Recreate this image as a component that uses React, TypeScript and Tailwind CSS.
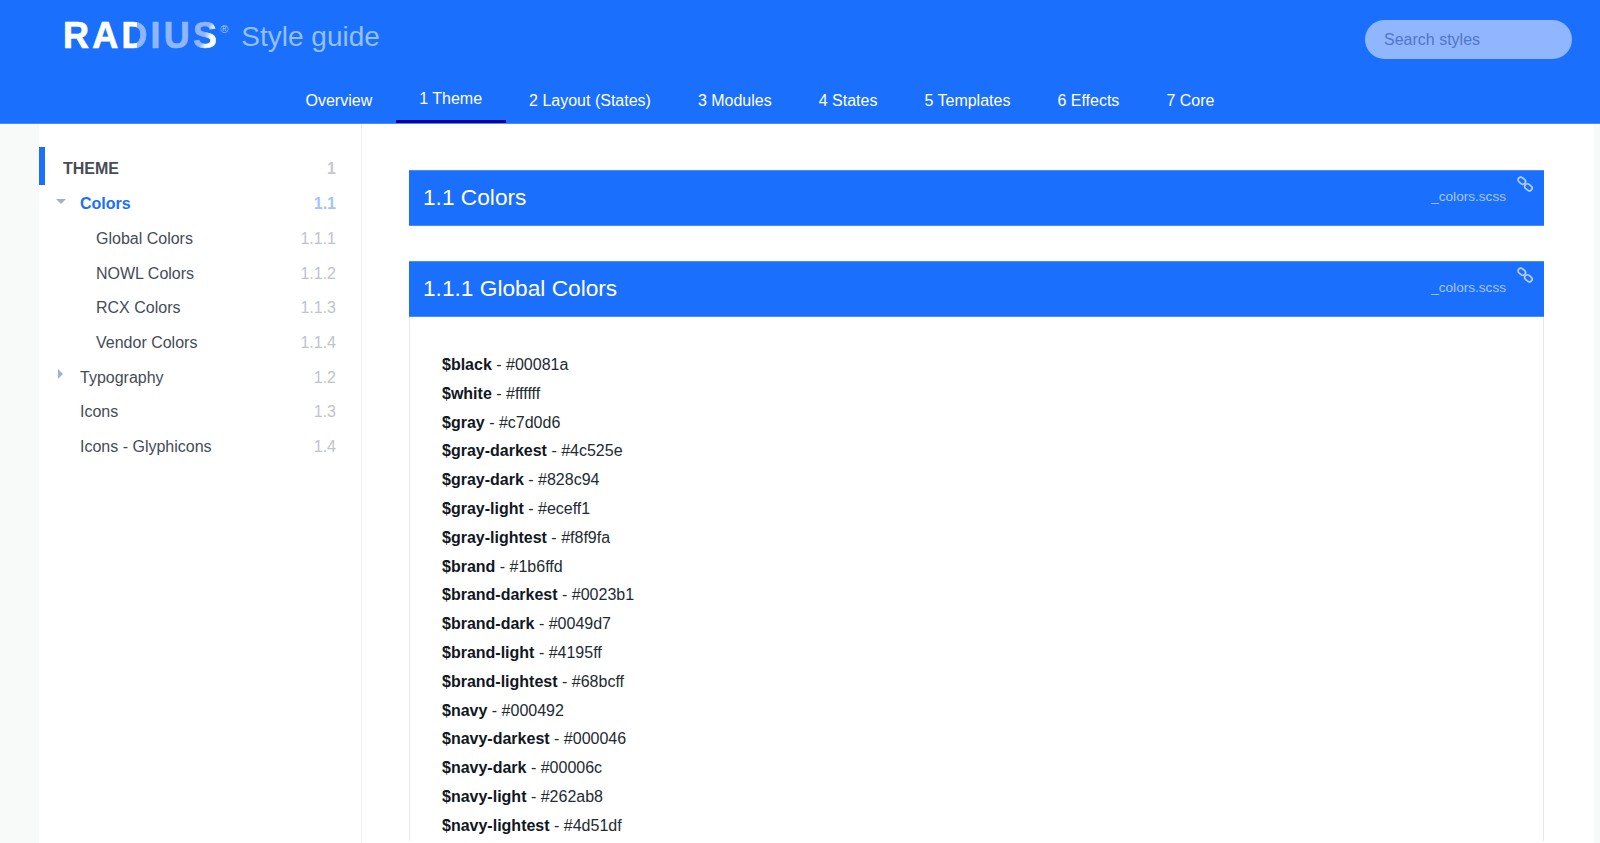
import React from "react";

const tabs = ["Overview", "1 Theme", "2 Layout (States)", "3 Modules", "4 States", "5 Templates", "6 Effects", "7 Core"];

const colors: [string, string][] = [
  ["$black", "#00081a"],
  ["$white", "#ffffff"],
  ["$gray", "#c7d0d6"],
  ["$gray-darkest", "#4c525e"],
  ["$gray-dark", "#828c94"],
  ["$gray-light", "#eceff1"],
  ["$gray-lightest", "#f8f9fa"],
  ["$brand", "#1b6ffd"],
  ["$brand-darkest", "#0023b1"],
  ["$brand-dark", "#0049d7"],
  ["$brand-light", "#4195ff"],
  ["$brand-lightest", "#68bcff"],
  ["$navy", "#000492"],
  ["$navy-darkest", "#000046"],
  ["$navy-dark", "#00006c"],
  ["$navy-light", "#262ab8"],
  ["$navy-lightest", "#4d51df"],
];

const ChainIcon = () => (
  <svg width="16" height="16" viewBox="0 0 16 16" fill="none" stroke="#b4ceff" strokeWidth="1.7" className="absolute right-[11px] top-[5px]">
    <rect x="0.8" y="2" width="8" height="5.4" rx="2.7" transform="rotate(40 4.8 4.7)" />
    <rect x="7.4" y="8.6" width="8" height="5.4" rx="2.7" transform="rotate(40 11.4 11.3)" />
  </svg>
);

const PanelHeader = ({ title }: { title: string }) => (
  <div className="relative flex h-[56px] items-center justify-between border-y border-[#4a8bff] bg-[#1b6ffd] pl-[14px] pr-[38px]">
    <h2 className="-mt-[1px] text-[22.7px] text-white">{title}</h2>
    <span className="-mt-[2px] text-[13.6px] text-[#a9c7ff]">_colors.scss</span>
    <ChainIcon />
  </div>
);

const NavRow = ({ label, num, className, numClass }: { label: string; num: string; className: string; numClass?: string }) => (
  <div className="flex h-[34.7px] items-center justify-between pr-[25px]">
    <span className={className}>{label}</span>
    <span className={numClass ?? "text-[#bfc4c9]"}>{num}</span>
  </div>
);

export default function App() {
  return (
    <div className="flex h-[843px] flex-col overflow-hidden bg-white font-['Liberation_Sans',Arial,sans-serif] text-[16px]">
      <header className="h-[124px] shrink-0 border-b border-[#4a8bff] bg-[#1b6ffd]">
        <div className="flex h-[79px] items-start justify-between pl-[63px] pr-[28px]">
          <div className="flex items-center pt-[15px]">
            <span className="text-[36px] leading-[40px] font-bold tracking-[3.2px] text-white [-webkit-text-stroke:0.7px]">
              RA
              <span className="bg-[linear-gradient(90deg,#ffffff_52%,#8fb6ff_52%)] bg-clip-text text-transparent">D</span>
              <span className="text-[#8fb6ff]">IU</span>
              <span className="bg-[linear-gradient(115deg,#8fb6ff_45%,#ffffff_60%)] bg-clip-text text-transparent">S</span>
            </span>
            <span className="mb-[14px] text-[11px] text-[#a9c7ff]">®</span>
            <span className="mt-[2px] ml-[13px] text-[28px] leading-[40px] text-[#93c0f5]">Style guide</span>
          </div>
          <div className="mt-[20px] flex h-[39px] w-[207px] items-center rounded-full bg-[#8fb6ff] pl-[19px] text-[#4f78c4]">Search styles</div>
        </div>
        <nav className="flex h-[44px] pl-[282px]">
          {tabs.map((t) => (
            <a
              key={t}
              className={
                t === "1 Theme"
                  ? "flex h-[44px] items-center border-b-[3px] border-[#000492] px-[23.5px] pb-[2px] text-white"
                  : "flex h-[44px] items-center px-[23.5px] text-white"
              }
            >
              {t}
            </a>
          ))}
        </nav>
      </header>

      <div className="flex min-h-0 flex-1">
        <div className="w-[39px] shrink-0 bg-[#f8f9f9]" />
        <aside className="w-[323px] shrink-0 border-r border-[#eceff1] pt-[23px]">
          <div className="mb-[2px] flex h-[38px] items-center justify-between border-l-[6px] border-[#1b6ffd] pt-[6px] pr-[25px] pl-[18px]">
            <span className="font-bold text-[#454b57]">THEME</span>
            <span className="font-bold text-[#c7c9cc]">1</span>
          </div>
          <div className="relative pl-[41px]">
            <NavRow label="Colors" num="1.1" className="font-bold text-[#1b6ffd]" numClass="font-bold text-[#a3c3ff]" />
            <span className="absolute top-[12px] left-[17px] h-0 w-0 border-x-[5px] border-t-[5px] border-x-transparent border-t-[#a3b0d4]" />
          </div>
          <div className="pl-[57px]">
            <NavRow label="Global Colors" num="1.1.1" className="text-[#454b57]" />
            <NavRow label="NOWL Colors" num="1.1.2" className="text-[#454b57]" />
            <NavRow label="RCX Colors" num="1.1.3" className="text-[#454b57]" />
            <NavRow label="Vendor Colors" num="1.1.4" className="text-[#454b57]" />
          </div>
          <div className="relative pl-[41px]">
            <NavRow label="Typography" num="1.2" className="text-[#454b57]" />
            <span className="absolute top-[9px] left-[19px] h-0 w-0 border-y-[5px] border-l-[5px] border-y-transparent border-l-[#a3b0d4]" />
            <NavRow label="Icons" num="1.3" className="text-[#454b57]" />
            <NavRow label="Icons - Glyphicons" num="1.4" className="text-[#454b57]" />
          </div>
        </aside>
        <main className="min-w-0 flex-1 pt-[46px] pr-[50px] pl-[47px]">
          <PanelHeader title="1.1 Colors" />
          <div className="mt-[35px]">
            <PanelHeader title="1.1.1 Global Colors" />
            <ul className="border-x border-[#e6e8ea] pt-[34px] pl-[32px] leading-[28.8px] text-[#222a33]">
              {colors.map(([name, hex]) => (
                <li key={name}>
                  <b className="text-[#111722]">{name}</b> - {hex}
                </li>
              ))}
            </ul>
          </div>
        </main>
        <div className="w-[6px] shrink-0 bg-[#f8f9f9]" />
      </div>
    </div>
  );
}
